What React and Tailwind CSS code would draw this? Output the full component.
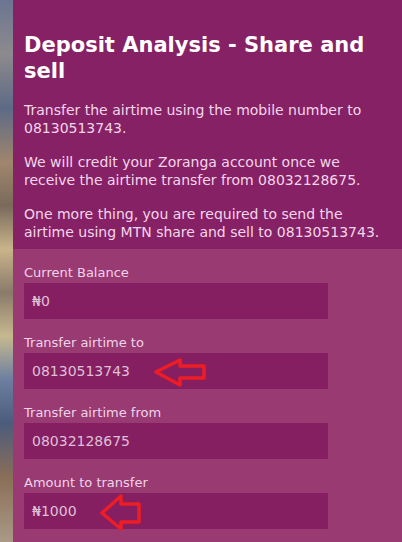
import React from 'react';

function LeftArrow({ className, w, h, d }) {
  return (
    <svg className={className} width={w} height={h} viewBox={`0 0 ${w} ${h}`} fill="none">
      <path d={d} stroke="#ee1c25" strokeWidth="3.5" strokeLinejoin="round" />
    </svg>
  );
}

function Field({ label, value, arrow }) {
  return (
    <div className="flex flex-col">
      <label className="text-[13px] leading-[16px] text-[#f2d3e9]">{label}</label>
      <div className="relative mt-[2px] flex h-[36px] w-[304px] items-center bg-[#861f62] px-[8px] text-[14px] text-[#dfbfd6]">
        {value}
        {arrow}
      </div>
    </div>
  );
}

export default function App() {
  return (
    <div
      className="flex h-[542px] w-[402px] overflow-hidden"
      style={{ fontFamily: '"DejaVu Sans", Verdana, sans-serif' }}
    >
      {/* photo strip behind the panel */}
      <div className="w-[13px] shrink-0 bg-[linear-gradient(180deg,#6b7592_0%,#8d8a8c_10%,#5d6a86_20%,#a0866c_30%,#7a6a5c_38%,#c9b48a_46%,#8a7a6a_54%,#c6b98f_62%,#6d7fa0_70%,#4b5c7c_78%,#8a6e58_88%,#a99a86_100%)]" />

      <div className="flex flex-1 flex-col">
        {/* Header */}
        <div className="h-[249px] bg-[#872166] px-[11px] pt-[32px]">
          <h1 className="text-[21px] font-bold leading-[26px] text-white">
            Deposit Analysis - Share and sell
          </h1>
          <div className="mt-[17px] space-y-[16px] text-[14px] leading-[18px] text-[#f3d6ea]">
            <p>Transfer the airtime using the mobile number to 08130513743.</p>
            <p>We will credit your Zoranga account once we receive the airtime transfer from 08032128675.</p>
            <p>One more thing, you are required to send the airtime using MTN share and sell to 08130513743.</p>
          </div>
        </div>

        {/* Form */}
        <div className="flex flex-1 flex-col gap-[16px] bg-[#993a73] px-[11px] pt-[16px]">
          <Field label="Current Balance" value="₦0" />
          <Field
            label="Transfer airtime to"
            value="08130513743"
            arrow={
              <LeftArrow
                className="absolute left-[129px] top-[5px]"
                w={54}
                h={30}
                d="M3 14 L27 2 L27 8 L51 8 L51 20 L27 20 L27 27 Z"
              />
            }
          />
          <Field label="Transfer airtime from" value="08032128675" />
          <Field
            label="Amount to transfer"
            value="₦1000"
            arrow={
              <LeftArrow
                className="absolute left-[75px] top-[0px]"
                w={44}
                h={38}
                d="M3 20 L22 3 L22 11 L40 11 L40 29 L22 29 L22 36 Z"
              />
            }
          />
        </div>
      </div>
    </div>
  );
}
